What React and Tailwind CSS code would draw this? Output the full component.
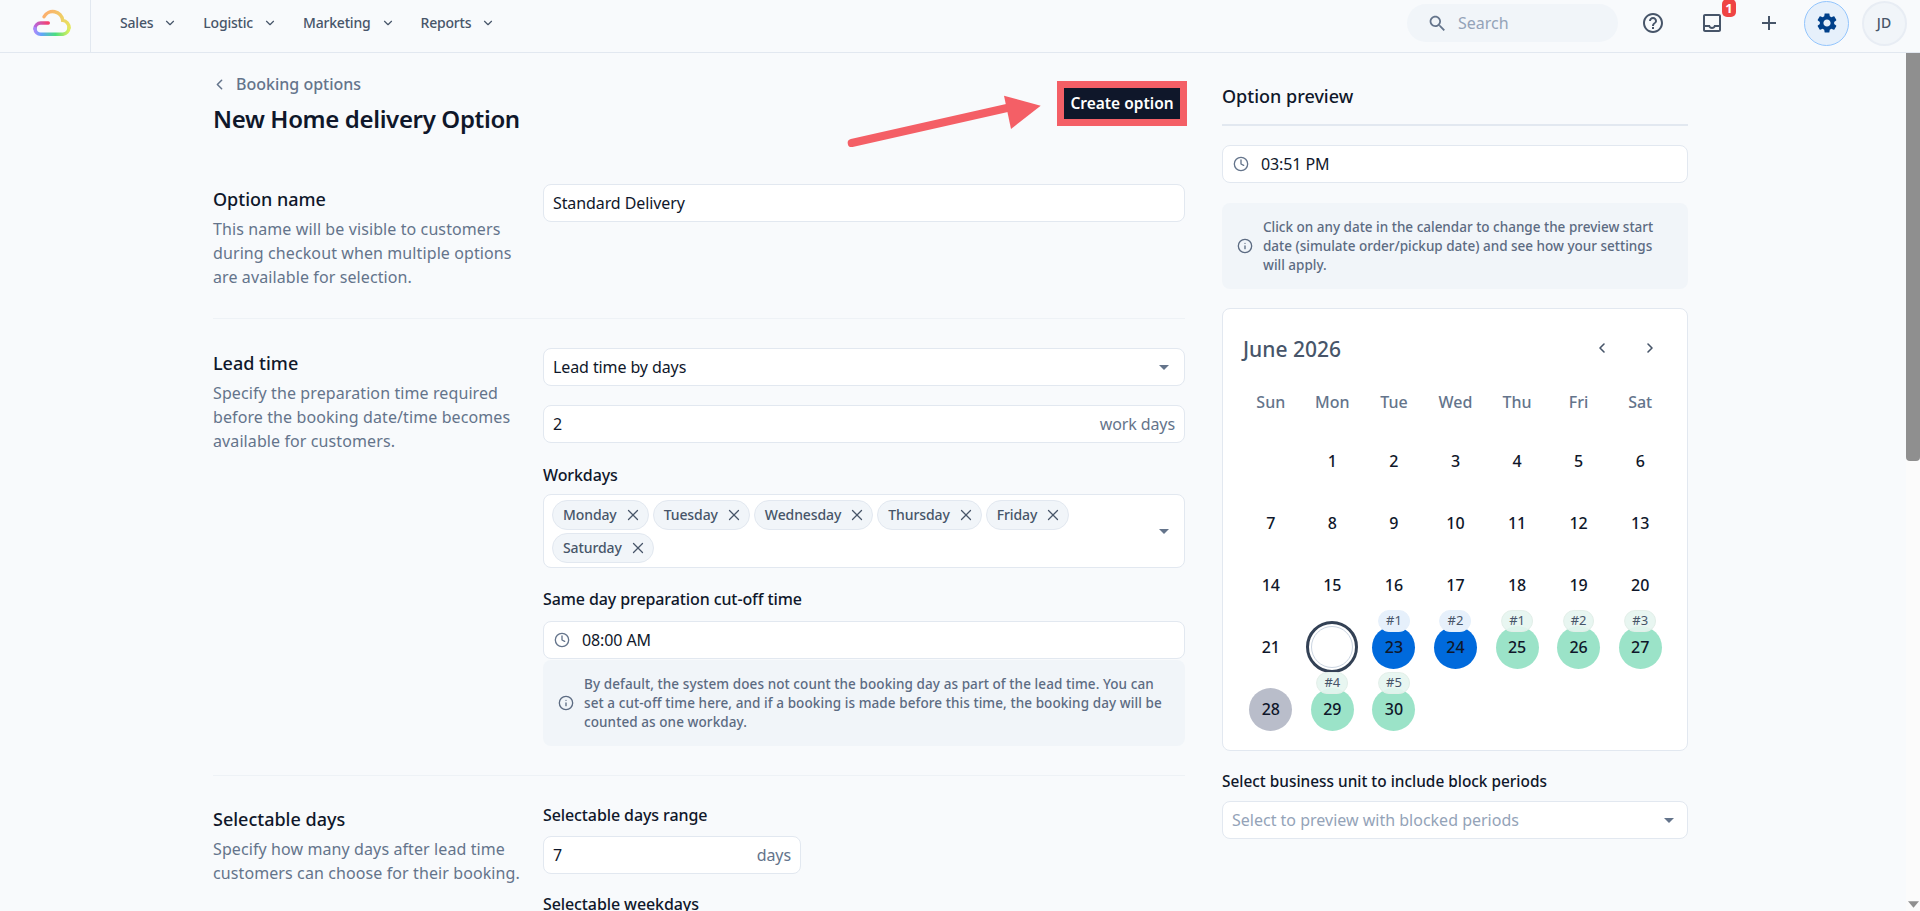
import React from 'react';
import { ChevronDown, ChevronLeft, ChevronRight, Clock, Info, X } from 'lucide-react';

const navItems = ['Sales', 'Logistic', 'Marketing', 'Reports'];
const workdays = ['Monday', 'Tuesday', 'Wednesday', 'Thursday', 'Friday', 'Saturday'];
const weekNames = ['Sun', 'Mon', 'Tue', 'Wed', 'Thu', 'Fri', 'Sat'];

// day number -> how it is marked in the preview calendar
const marks = {
  23: { tone: 'blue', badge: '#1' },
  24: { tone: 'blue', badge: '#2' },
  25: { tone: 'green', badge: '#1' },
  26: { tone: 'green', badge: '#2' },
  27: { tone: 'green', badge: '#3' },
  28: { tone: 'gray' },
  29: { tone: 'green', badge: '#4' },
  30: { tone: 'green', badge: '#5' },
};

const toneClass = {
  blue: 'bg-[#006adc]',
  green: 'bg-[#9be3c8]',
  gray: 'bg-[#b9bdca]',
};

const badgeClass = {
  blue: 'bg-[#e6f0fb] border-[#e6f0fb]',
  green: 'bg-[#e6f5ef]/90 border-[#e3efe9]',
};

const Material = ({ d, className }) => (
  <svg viewBox="0 0 24 24" fill="currentColor" className={className}>
    <path d={d} />
  </svg>
);

const Caret = () => (
  <svg viewBox="0 0 10 5" className="w-[10px] h-[5px] shrink-0 text-[#64748b]" fill="currentColor">
    <path d="M0 0h10L5 5z" />
  </svg>
);

const Logo = () => (
  <svg viewBox="0 0 44 30" fill="none" className="w-[44px] h-[30px]" strokeWidth="3.4" strokeLinecap="round">
    <defs>
      <linearGradient id="cloudBottom" gradientUnits="userSpaceOnUse" x1="5" y1="0" x2="39" y2="0">
        <stop offset="0" stopColor="#a78bfa" />
        <stop offset="0.2" stopColor="#60a5fa" />
        <stop offset="0.6" stopColor="#4ade80" />
        <stop offset="1" stopColor="#d9ef5c" />
      </linearGradient>
      <linearGradient id="cloudTop" gradientUnits="userSpaceOnUse" x1="14" y1="3" x2="39" y2="20">
        <stop offset="0" stopColor="#fdab6f" />
        <stop offset="1" stopColor="#e6e55f" />
      </linearGradient>
      <linearGradient id="cloudBar" gradientUnits="userSpaceOnUse" x1="18" y1="15" x2="5" y2="21">
        <stop offset="0" stopColor="#f4406f" />
        <stop offset="1" stopColor="#b06be8" />
      </linearGradient>
    </defs>
    <path d="M18.3 15H10.7A5.65 5.65 0 0 0 5 20.7" stroke="url(#cloudBar)" />
    <path d="M5 20.7A5.65 5.65 0 0 0 10.7 26.3H33A7 7 0 0 0 39 19.7" stroke="url(#cloudBottom)" />
    <path d="M39 19.7A7 7 0 0 0 32.7 12.4A10 10 0 0 0 14 8.7" stroke="url(#cloudTop)" />
  </svg>
);

const Header = () => (
  <header className="h-[53px] shrink-0 flex items-center border-b border-[#e2e8f0] bg-[#f8fafc]">
    <div className="w-[91px] h-full flex items-center pl-[30px] pb-[7px] border-r border-[#e2e8f0]">
      <Logo />
    </div>
    <nav className="flex items-center h-full pb-[6px] pl-[29px] gap-[26px]">
      {navItems.map((item) => (
        <div key={item} className="flex items-center gap-[10px] text-sm tracking-[-0.2px] font-medium text-[#475569]">
          <span>{item}</span>
          <ChevronDown className="w-[14px] h-[14px]" />
        </div>
      ))}
    </nav>
    <div className="ml-auto flex items-center h-full pb-[6px] pr-[7px]">
      <div className="w-[211px] h-[38px] mr-[6px] flex items-center gap-[10px] pl-[20px] rounded-full bg-[#f1f5f9]">
        <Material
          className="w-[21px] h-[21px] text-[#64748b]"
          d="M15.5 14h-.79l-.28-.27C15.41 12.59 16 11.11 16 9.5 16 5.91 13.09 3 9.5 3S3 5.91 3 9.5 5.91 16 9.5 16c1.61 0 3.09-.59 4.23-1.57l.27.28v.79l5 4.99L20.49 19l-4.99-5zm-6 0C7.01 14 5 11.99 5 9.5S7.01 5 9.5 5 14 7.01 14 9.5 11.99 14 9.5 14z"
        />
        <span className="text-base text-[#94a3b8]">Search</span>
      </div>
      <div className="w-[58px] flex justify-center">
        <Material
          className="w-6 h-6 text-[#475569]"
          d="M11 18h2v-2h-2v2zm1-16C6.48 2 2 6.48 2 12s4.48 10 10 10 10-4.48 10-10S17.52 2 12 2zm0 18c-4.41 0-8-3.59-8-8s3.59-8 8-8 8 3.59 8 8-3.59 8-8 8zm0-14c-2.21 0-4 1.79-4 4h2c0-1.1.9-2 2-2s2 .9 2 2c0 2-3 1.75-3 5h2c0-2.25 3-2.5 3-5 0-2.21-1.79-4-4-4z"
        />
      </div>
      <div className="w-[58px] flex justify-center">
        <div className="relative w-6 h-6 translate-x-[1px]">
          <Material
            className="w-6 h-6 text-[#475569]"
            d="M19 3H5c-1.1 0-2 .9-2 2v14c0 1.1.9 2 2 2h14c1.1 0 2-.9 2-2V5c0-1.1-.9-2-2-2zm0 16H5v-3h3.56c.69 1.19 1.97 2 3.44 2s2.75-.81 3.44-2H19v3zm0-5h-4.99c0 1.1-.9 2-2 2s-2-.9-2-2H5V5h14v9z"
          />
          <span className="absolute left-[22px] top-[-12px] w-[14px] h-[18px] flex items-center justify-center rounded-[5px] bg-[#ef4444] text-white text-[13px] font-bold leading-none">
            1
          </span>
        </div>
      </div>
      <div className="w-[58px] flex justify-center">
        <Material className="w-6 h-6 text-[#475569]" d="M19 13h-6v6h-2v-6H5v-2h6V5h2v6h6v2z" />
      </div>
      <div className="w-[57px] flex justify-center">
        <div className="w-[45px] h-[45px] flex items-center justify-center rounded-full bg-[#e6f0fb] border border-[#93c5fd]">
          <Material
            className="w-6 h-6 text-[#00408a]"
            d="M19.14 12.94c.04-.3.06-.61.06-.94 0-.32-.02-.64-.07-.94l2.03-1.58c.18-.14.23-.41.12-.61l-1.92-3.32c-.12-.22-.37-.29-.59-.22l-2.39.96c-.5-.38-1.03-.7-1.62-.94l-.36-2.54c-.04-.24-.24-.41-.48-.41h-3.84c-.24 0-.43.17-.47.41l-.36 2.54c-.59.24-1.13.57-1.62.94l-2.39-.96c-.22-.08-.47 0-.59.22L2.74 8.87c-.12.21-.08.47.12.61l2.03 1.58c-.05.3-.09.63-.09.94s.02.64.07.94l-2.03 1.58c-.18.14-.23.41-.12.61l1.92 3.32c.12.22.37.29.59.22l2.39-.96c.5.38 1.03.7 1.62.94l.36 2.54c.05.24.24.41.48.41h3.84c.24 0 .44-.17.47-.41l.36-2.54c.59-.24 1.13-.56 1.62-.94l2.39.96c.22.08.47 0 .59-.22l1.92-3.32c.12-.22.07-.47-.12-.61l-2.01-1.58zM12 15.6c-1.98 0-3.6-1.62-3.6-3.6s1.62-3.6 3.6-3.6 3.6 1.62 3.6 3.6-1.62 3.6-3.6 3.6z"
          />
        </div>
      </div>
      <div className="w-[58px] flex justify-center">
        <div className="w-[45px] h-[45px] flex items-center justify-center rounded-full bg-[#f1f5f9] border-2 border-[#e8edf4] text-sm font-medium text-[#475569]">
          JD
        </div>
      </div>
    </div>
  </header>
);

const Field = ({ children, className = '' }) => (
  <div className={`h-[38px] flex items-center px-[9px] bg-white border border-[#e2e8f0] rounded-lg text-base tracking-[-0.1px] text-[#0f172a] ${className}`}>
    {children}
  </div>
);

const TimeField = ({ value }) => (
  <Field className="pl-[10px]">
    <Clock className="w-4 h-4 text-[#64748b]" />
    <span className="ml-[12px]">{value}</span>
  </Field>
);

const InfoBox = ({ children, className = '' }) => (
  <div className={`flex items-center gap-[10px] px-[15px] bg-[#f1f5f9] rounded-lg text-[13.5px] leading-[19px] font-medium text-[#5c6b82] ${className}`}>
    <Info className="w-4 h-4 shrink-0" />
    <p>{children}</p>
  </div>
);

const Label = ({ children }) => (
  <div className="h-5 leading-5 text-base font-medium tracking-[-0.1px] text-[#0f172a]">{children}</div>
);

const SectionIntro = ({ title, children, tight = false }) => (
  <div className={`pr-[15px] ${tight ? 'pt-0' : 'pt-[1px]'}`}>
    <h3 className="h-7 leading-7 text-lg font-medium text-[#0f172a]">{title}</h3>
    <p className="mt-[4px] text-base leading-6 tracking-[0.1px] text-[#64748b]">{children}</p>
  </div>
);

const Section = ({ intro, children, border = true }) => (
  <section className={`grid grid-cols-[330px_642px] pb-[29px] mb-[29px] ${border ? 'border-b border-[#eef2f6]' : ''}`}>
    {intro}
    <div>{children}</div>
  </section>
);

const Chip = ({ name }) => (
  <span className="h-[30px] flex items-center gap-[7px] pl-[10px] pr-[6px] rounded-full bg-[#f1f5f9] border border-[#e2e8f0] text-sm tracking-[-0.1px] font-medium text-[#475569]">
    {name}
    <X className="w-[18px] h-[18px]" strokeWidth={1.7} />
  </span>
);

const FormColumn = () => (
  <div className="w-[972px] shrink-0">
    <div className="relative flex items-center justify-between pt-[19px] mb-[49px]">
      <div>
        <div className="h-6 flex items-center gap-[8px] text-base font-medium text-[#64748b]">
          <ChevronLeft className="w-[17px] h-[17px] -ml-[2px]" strokeWidth={2.2} />
          <span>Booking options</span>
        </div>
        <h1 className="mt-[7px] h-8 leading-8 text-2xl tracking-[-0.35px] font-semibold text-[#0f172a]">New Home delivery Option</h1>
      </div>
      <button className="w-[130px] h-[45px] -mr-[2px] pt-[1px] border-[7px] border-[#f45f66] bg-[#0f172a] text-white text-[15.5px] font-semibold">
        Create option
      </button>
      {/* annotation arrow drawn over the page */}
      <svg viewBox="0 0 210 60" className="absolute left-[627px] top-[37px] w-[210px] h-[60px]" fill="#f45f66">
        <path d="M11.7 53L167 18" stroke="#f45f66" strokeWidth="8" strokeLinecap="round" fill="none" />
        <path d="M164 5.7L200.7 15.7L171 39z" />
      </svg>
    </div>

    <Section
      intro={
        <SectionIntro title="Option name">
          This name will be visible to customers during checkout when multiple options are available for selection.
        </SectionIntro>
      }
    >
      <Field>Standard Delivery</Field>
    </Section>

    <Section
      intro={
        <SectionIntro title="Lead time">
          Specify the preparation time required before the booking date/time becomes available for customers.
        </SectionIntro>
      }
    >
      <Field className="justify-between pr-[15px]">
        <span>Lead time by days</span>
        <Caret />
      </Field>
      <Field className="justify-between mt-[19px]">
        <span>2</span>
        <span className="text-[#64748b]">work days</span>
      </Field>
      <div className="mt-[22px]">
        <Label>Workdays</Label>
      </div>
      <div className="mt-[9px] h-[74px] flex items-center pl-2 pr-[15px] bg-white border border-[#e2e8f0] rounded-lg">
        <div className="flex-1 flex flex-wrap gap-x-1 gap-y-[3px] pr-[18px]">
          {workdays.map((day) => (
            <Chip key={day} name={day} />
          ))}
        </div>
        <Caret />
      </div>
      <div className="mt-[21px]">
        <Label>Same day preparation cut-off time</Label>
      </div>
      <div className="mt-[12px]">
        <TimeField value="08:00 AM" />
      </div>
      <InfoBox className="mt-[1px] h-[86px] tracking-[0.08px]">
        By default, the system does not count the booking day as part of the lead time. You can
        <br />
        set a cut-off time here, and if a booking is made before this time, the booking day will be counted as one workday.
      </InfoBox>
    </Section>

    <Section
      border={false}
      intro={
        <SectionIntro tight title="Selectable days">
          Specify how many days after lead time customers can choose for their booking.
        </SectionIntro>
      }
    >
      <Label>Selectable days range</Label>
      <Field className="justify-between w-[258px] mt-[11px]">
        <span>7</span>
        <span className="text-[#64748b]">days</span>
      </Field>
      <div className="mt-[20px]">
        <Label>Selectable weekdays</Label>
      </div>
    </Section>
  </div>
);

const DayCell = ({ day }) => {
  const mark = marks[day];
  if (day === 22) {
    return (
      <div className="h-[62px] flex items-center justify-center">
        <div className="w-[52px] h-[52px] p-[2px] rounded-full border-[3px] border-[#334155]">
          <div className="w-full h-full flex items-center justify-center rounded-full border border-[#cbd5e1] text-base font-medium text-white">
            22
          </div>
        </div>
      </div>
    );
  }
  return (
    <div className="relative h-[62px] flex items-center justify-center">
      <div className={`w-[43px] h-[43px] flex items-center justify-center rounded-full text-base font-medium text-[#0f172a] ${mark ? toneClass[mark.tone] : ''}`}>
        {day}
      </div>
      {mark?.badge && (
        <span className={`absolute top-[-6px] left-1/2 -translate-x-1/2 h-[22px] px-[7px] flex items-center rounded-full border text-[13px] text-[#475569] ${badgeClass[mark.tone]}`}>
          {mark.badge}
        </span>
      )}
    </div>
  );
};

const Calendar = () => {
  const days = Array.from({ length: 30 }, (_, i) => i + 1);
  return (
    <div className="mt-[19px] h-[443px] pt-[23px] pl-[17px] pr-[16px] bg-white border border-[#e2e8f0] rounded-lg">
      <div className="h-9 flex items-center justify-between">
        <span className="pl-[3px] -mt-[1px] text-[21px] font-medium text-[#475569]">June 2026</span>
        <div className="flex -mt-[5px] text-[#475569]">
          <span className="w-[55px] flex justify-center"><ChevronLeft className="w-4 h-4" strokeWidth={2.4} /></span>
          <span className="w-[42px] flex justify-center"><ChevronRight className="w-4 h-4" strokeWidth={2.4} /></span>
        </div>
      </div>
      <div className="mt-[18px] h-8 grid grid-cols-7 items-center text-center text-base font-medium text-[#64748b]">
        {weekNames.map((name) => (
          <span key={name}>{name}</span>
        ))}
      </div>
      <div className="mt-[12px] grid grid-cols-7">
        <div />
        {days.map((day) => (
          <DayCell key={day} day={day} />
        ))}
      </div>
    </div>
  );
};

const PreviewColumn = () => (
  <div className="w-[466px] ml-[37px] shrink-0 pt-[29px]">
    <h2 className="h-7 leading-7 text-lg font-medium text-[#0f172a]">Option preview</h2>
    <div className="mt-[14px] border-t-2 border-[#e2e8f0]" />
    <div className="mt-[19px]">
      <TimeField value="03:51 PM" />
    </div>
    <InfoBox className="mt-5 h-[86px]">
      Click on any date in the calendar to change the preview start date (simulate order/pickup date) and see how your
      settings will apply.
    </InfoBox>
    <Calendar />
    <div className="mt-[21px] h-5 leading-5 text-[15.4px] font-medium text-[#0f172a]">
      Select business unit to include block periods
    </div>
    <Field className="justify-between mt-[9px] pr-[13px]">
      <span className="tracking-normal text-[#94a3b8]">Select to preview with blocked periods</span>
      <Caret />
    </Field>
  </div>
);

const Scrollbar = () => (
  <div className="w-[14px] shrink-0 flex flex-col items-center bg-[#fbfbfb]">
    <div className="w-full h-[408px] bg-[#8f8f8f] rounded-b-[4px]" />
    <svg viewBox="0 0 12 7" className="mt-auto mb-[3px] w-[11px] h-[7px]" fill="#8f8f8f">
      <path d="M0 0h12L6 7z" />
    </svg>
  </div>
);

export default function App() {
  return (
    <div className="h-screen flex flex-col overflow-hidden bg-[#f8fafc] [font-family:'Noto_Sans',sans-serif]">
      <Header />
      <main className="flex-1 min-h-0 flex overflow-hidden">
        <div className="flex-1 flex items-start pl-[213px] overflow-hidden">
          <FormColumn />
          <PreviewColumn />
        </div>
        <Scrollbar />
      </main>
    </div>
  );
}
